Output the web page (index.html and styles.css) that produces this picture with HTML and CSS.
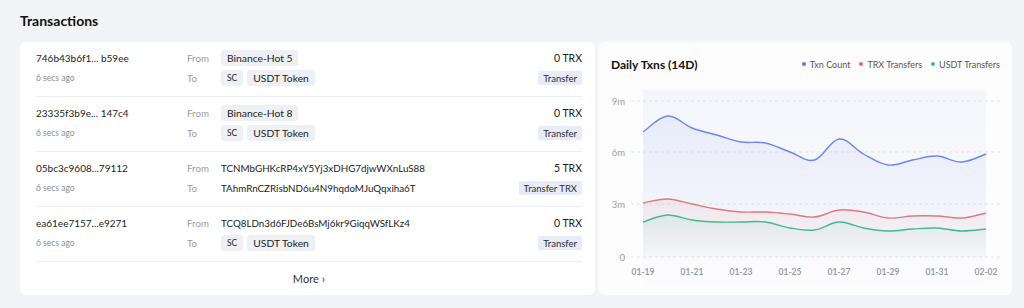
FILE: index.html
```html
<!DOCTYPE html>
<html lang="en">
<head>
<meta charset="utf-8">
<title>Transactions</title>
<link rel="stylesheet" href="styles.css">
</head>
<body>
<h2 class="page-title">Transactions</h2>
<div class="panels">
  <section class="card tx-card">
    <div class="tx-row">
      <div class="tx-id"><div class="hash">746b43b6f1... b59ee</div><div class="age">6 secs ago</div></div>
      <div class="tx-parties">
        <div class="party"><span class="lbl">From</span><span class="pill">Binance-Hot 5</span></div>
        <div class="party"><span class="lbl">To</span><span class="pill sc">SC</span><span class="pill">USDT Token</span></div>
      </div>
      <div class="tx-val"><div class="amount">0 TRX</div><div class="line2"><span class="tag">Transfer</span></div></div>
    </div>
    <div class="tx-row">
      <div class="tx-id"><div class="hash">23335f3b9e... 147c4</div><div class="age">6 secs ago</div></div>
      <div class="tx-parties">
        <div class="party"><span class="lbl">From</span><span class="pill">Binance-Hot 8</span></div>
        <div class="party"><span class="lbl">To</span><span class="pill sc">SC</span><span class="pill">USDT Token</span></div>
      </div>
      <div class="tx-val"><div class="amount">0 TRX</div><div class="line2"><span class="tag">Transfer</span></div></div>
    </div>
    <div class="tx-row">
      <div class="tx-id"><div class="hash">05bc3c9608...79112</div><div class="age">6 secs ago</div></div>
      <div class="tx-parties">
        <div class="party"><span class="lbl">From</span><span class="addr">TCNMbGHKcRP4xY5Yj3xDHG7djwWXnLuS88</span></div>
        <div class="party"><span class="lbl">To</span><span class="addr">TAhmRnCZRisbND6u4N9hqdoMJuQqxiha6T</span></div>
      </div>
      <div class="tx-val"><div class="amount">5 TRX</div><div class="line2"><span class="tag">Transfer TRX</span></div></div>
    </div>
    <div class="tx-row">
      <div class="tx-id"><div class="hash">ea61ee7157...e9271</div><div class="age">6 secs ago</div></div>
      <div class="tx-parties">
        <div class="party"><span class="lbl">From</span><span class="addr">TCQ8LDn3d6FJDe6BsMj6kr9GiqqWSfLKz4</span></div>
        <div class="party"><span class="lbl">To</span><span class="pill sc">SC</span><span class="pill">USDT Token</span></div>
      </div>
      <div class="tx-val"><div class="amount">0 TRX</div><div class="line2"><span class="tag">Transfer</span></div></div>
    </div>
    <div class="more">More <span class="chev">›</span></div>
  </section>
  <section class="card chart-card">
    <div class="chart-head">
      <h3 class="chart-title">Daily Txns (14D)</h3>
      <ul class="legend">
        <li><span class="dot blue"></span>Txn Count</li>
        <li><span class="dot red"></span>TRX Transfers</li>
        <li><span class="dot green"></span>USDT Transfers</li>
      </ul>
    </div>
    <svg class="chart" width="414" height="195" viewBox="0 0 414 195">
      <defs>
        <linearGradient id="gPlot" x1="0" y1="0" x2="0" y2="1">
          <stop offset="0" stop-color="#f4f5fb"/>
          <stop offset="1" stop-color="#f8f9fc" stop-opacity="0.3"/>
        </linearGradient>
        <linearGradient id="gBlue" x1="0" y1="0" x2="0" y2="1">
          <stop offset="0" stop-color="#6d87f2" stop-opacity="0.10"/>
          <stop offset="1" stop-color="#6d87f2" stop-opacity="0.02"/>
        </linearGradient>
        <linearGradient id="gRed" x1="0" y1="0" x2="0" y2="1">
          <stop offset="0" stop-color="#e07272" stop-opacity="0.10"/>
          <stop offset="1" stop-color="#e07272" stop-opacity="0.02"/>
        </linearGradient>
        <linearGradient id="gGreen" x1="0" y1="0" x2="0" y2="1">
          <stop offset="0" stop-color="#3fbb8d" stop-opacity="0.10"/>
          <stop offset="1" stop-color="#3fbb8d" stop-opacity="0.01"/>
        </linearGradient>
      </defs>
      <rect x="45" y="0" width="343" height="195" fill="url(#gPlot)"/>
      <g class="grid">
        <line x1="33" y1="11" x2="402" y2="11"/>
        <line x1="33" y1="62" x2="402" y2="62"/>
        <line x1="33" y1="114" x2="402" y2="114"/>
        <line x1="33" y1="167" x2="402" y2="167"/>
      </g>
      <g class="ylabels">
        <text x="27" y="14.5">9m</text>
        <text x="27" y="65.5">6m</text>
        <text x="27" y="117.5">3m</text>
        <text x="27" y="170.5">0</text>
      </g>
      <path id="aBlue" fill="url(#gBlue)"/>
      <path id="aRed" fill="url(#gRed)"/>
      <path id="aGreen" fill="url(#gGreen)"/>
      <path id="lBlue" class="ln" stroke="#6a86f0"/>
      <path id="lRed" class="ln" stroke="#e07a7a"/>
      <path id="lGreen" class="ln" stroke="#3fbb8d"/>
      <g class="xlabels">
        <text x="45" y="185">01-19</text>
        <text x="94" y="185">01-21</text>
        <text x="143" y="185">01-23</text>
        <text x="192" y="185">01-25</text>
        <text x="241" y="185">01-27</text>
        <text x="290" y="185">01-29</text>
        <text x="339" y="185">01-31</text>
        <text x="388" y="185">02-02</text>
      </g>
    </svg>
  </section>
</div>
<script src="chart.js"></script>
</body>
</html>
```
FILE: chart.js
```js
(function () {
  var base = 167;
  var series = {
    Blue: [132, 116, 128, 135, 142, 143, 152, 160, 139, 154, 165, 160, 156, 162, 154],
    Red: [203, 199, 204, 209, 212, 212, 214, 217, 210, 212, 218, 216, 216, 218, 213],
    Green: [222, 215, 220, 222, 222, 222, 228, 230, 222, 228, 231, 229, 228, 231, 229]
  };
  function pts(arr) {
    return arr.map(function (v, i) { return [45 + 24.5 * i, v - 90]; });
  }
  function smooth(p) {
    var d = 'M' + p[0][0] + ' ' + p[0][1];
    for (var i = 0; i < p.length - 1; i++) {
      var p0 = p[i - 1] || p[i], p1 = p[i], p2 = p[i + 1], p3 = p[i + 2] || p2;
      var t = 0.18;
      var c1x = p1[0] + (p2[0] - p0[0]) * t, c1y = p1[1] + (p2[1] - p0[1]) * t;
      var c2x = p2[0] - (p3[0] - p1[0]) * t, c2y = p2[1] - (p3[1] - p1[1]) * t;
      d += ' C' + c1x.toFixed(2) + ' ' + c1y.toFixed(2) + ' ' + c2x.toFixed(2) + ' ' + c2y.toFixed(2) + ' ' + p2[0] + ' ' + p2[1];
    }
    return d;
  }
  Object.keys(series).forEach(function (k) {
    var p = pts(series[k]);
    var d = smooth(p);
    document.getElementById('l' + k).setAttribute('d', d);
    var last = p[p.length - 1];
    document.getElementById('a' + k).setAttribute('d', d + ' L' + last[0] + ' ' + base + ' L' + p[0][0] + ' ' + base + ' Z');
  });
})();
```
FILE: styles.css
```css
* { box-sizing: border-box; }
html, body { margin: 0; padding: 0; }
body {
  background: #f3f4f8;
  font-family: Lato, "Open Sans", "Liberation Sans", sans-serif;
  color: #222;
  width: 1024px;
  height: 308px;
  overflow: hidden;
}
.page-title {
  margin: 0;
  padding: 12px 20px 0;
  font-size: 14px;
  line-height: 18px;
  font-weight: 700;
  color: #111;
  margin-bottom: 12px;
}
.panels {
  display: flex;
  gap: 3px;
  padding: 0 12px 0 20px;
}
.card {
  background: #fff;
  border-radius: 6px;
  height: 253px;
}
.tx-card {
  width: 575px;
  padding: 0 13px 0 16px;
}
.tx-row {
  display: flex;
  padding: 6px 0 8px;
  border-bottom: 1px solid #eceef2;
}
.tx-id { width: 151px; }
.hash, .age, .party, .amount, .line2 {
  height: 20px;
  display: flex;
  align-items: center;
}
.hash { font-size: 10px; color: #1c1c1c; }
.age { font-size: 8.5px; color: #8a8d94; }
.tx-parties { flex: 1; }
.lbl {
  width: 34px;
  font-size: 9.7px;
  color: #9a9ca3;
}
.pill {
  display: inline-flex;
  align-items: center;
  height: 16px;
  padding: 0 6px;
  margin-right: 4px;
  background: #eef0f3;
  border-radius: 3px;
  font-size: 10.3px;
  color: #222;
}
.pill.sc { font-size: 8.5px; padding: 0 6px; }
.addr { font-size: 9.8px; color: #1c1c1c; }
.tx-val {
  display: flex;
  flex-direction: column;
  align-items: flex-end;
}
.amount { font-size: 10.5px; color: #1c1c1c; }
.tag {
  display: inline-flex;
  align-items: center;
  height: 14px;
  padding: 0 5px;
  background: #e7ecf8;
  border-radius: 2px;
  font-size: 9.5px;
  color: #2a2d35;
}
.more {
  height: 32px;
  display: flex;
  align-items: center;
  justify-content: center;
  font-size: 11px;
  color: #333;
  gap: 3px;
}
.chev { font-size: 12px; }
.chart-card {
  flex: 1;
  background: #fdfdfe;
  padding-top: 14px;
}
.chart-head {
  display: flex;
  align-items: center;
  justify-content: space-between;
  padding: 0 12px 0 13px;
  height: 16px;
}
.chart-title {
  margin: 0;
  font-size: 12px;
  font-weight: 700;
  color: #111;
}
.legend {
  list-style: none;
  margin: 0;
  padding: 0;
  display: flex;
  gap: 9px;
  font-size: 9px;
  color: #555;
}
.legend li { display: flex; align-items: center; gap: 4px; }
.dot { width: 4px; height: 4px; border-radius: 50%; }
.dot.blue { background: #5a7df5; }
.dot.red { background: #e06a6a; }
.dot.green { background: #3dbb8f; }
.chart {
  display: block;
  margin-top: 18px;
}
.grid line { stroke: #dfe1e7; stroke-width: 1; stroke-dasharray: 3 3; }
.ylabels text { font-size: 9.5px; fill: #9a9ca3; text-anchor: end; }
.xlabels text { font-size: 8.5px; fill: #9a9ca3; text-anchor: middle; font-weight: 700; }
.ln { fill: none; stroke-width: 1.4; }
```
